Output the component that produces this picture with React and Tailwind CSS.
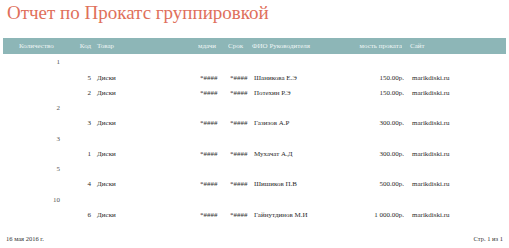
import React from 'react'

const groups = [
  { qty: '1', items: [
    { code: '5', name: 'Шаникова Е.Э', price: '150.00р.' },
    { code: '2', name: 'Потехин Р.Э', price: '150.00р.' },
  ] },
  { qty: '2', items: [{ code: '3', name: 'Газизов А.Р', price: '300.00р.' }] },
  { qty: '3', items: [{ code: '1', name: 'Мухачат А.Д', price: '300.00р.' }] },
  { qty: '5', items: [{ code: '4', name: 'Шишиков П.В', price: '500.00р.' }] },
  { qty: '10', items: [{ code: '6', name: 'Гайнутдинов М.И', price: '1 000.00р.' }] },
]

function Row({ qty, code, goods, d1, d2, fio, price, site, header }) {
  return (
    <div className={`flex items-center ${header ? 'h-full' : 'h-[15.25px]'}`}>
      <div className={`w-[61px] shrink-0 ${header ? 'text-left pl-[19px]' : 'text-right pr-[1px]'}`}>{qty}</div>
      <div className={`w-[30px] shrink-0 text-right ${header ? '-mr-[2px]' : ''}`}>{code}</div>
      <div className={`w-[109px] shrink-0 ${header ? 'pl-[8px]' : 'pl-[6px]'}`}>{goods}</div>
      <div className="w-[30px] shrink-0 overflow-hidden whitespace-nowrap">{d1}</div>
      <div className="w-[24px] shrink-0 overflow-hidden whitespace-nowrap">{d2}</div>
      <div className="w-[90px] shrink-0 whitespace-nowrap">{fio}</div>
      <div className="w-[60px] shrink-0 text-right whitespace-nowrap overflow-hidden">{price}</div>
      <div className="pl-[8px] whitespace-nowrap">{site}</div>
    </div>
  )
}

export default function App() {
  return (
    <div className="w-[509px] h-[248px] bg-white relative overflow-hidden" style={{ fontFamily: '"Liberation Serif", "DejaVu Serif", serif' }}>
      <div className="pl-[7px] pt-[2px] h-[38px] text-[19px] leading-[21px] text-[#e0705b]">
        Отчет по Прокатс группировкой
      </div>

      <div className="ml-[3px] mr-[3px] h-[16px] bg-[#8db6b7] text-[7px] text-[#eef5f5]">
        <div className="-ml-[3px] h-full">
          <Row header qty="Количество" code="Код" goods="Товар" d1="мдачи" d2="Срок" fio="ФИО Руководителя" price="мость проката" site="Сайт" />
        </div>
      </div>

      <div className="text-[7px] text-[#2b2b2b] pt-[1px]">
        {groups.map((g) => (
          <div key={g.qty}>
            <div className="flex items-center h-[15.25px]">
              <div className="w-[61px] shrink-0 text-right pr-[1px] text-[#555]">{g.qty}</div>
            </div>
            {g.items.map((it) => (
              <Row key={it.code} code={it.code} goods="Диски" d1="*####" d2="*####" fio={it.name} price={it.price} site="marikdiski.ru" />
            ))}
          </div>
        ))}
      </div>

      <div className="absolute left-0 right-0 top-[234px] flex justify-between px-[6px] text-[6.5px] text-[#333]">
        <span>16 мая 2016 г.</span>
        <span>Стр. 1 из 1</span>
      </div>
    </div>
  )
}
